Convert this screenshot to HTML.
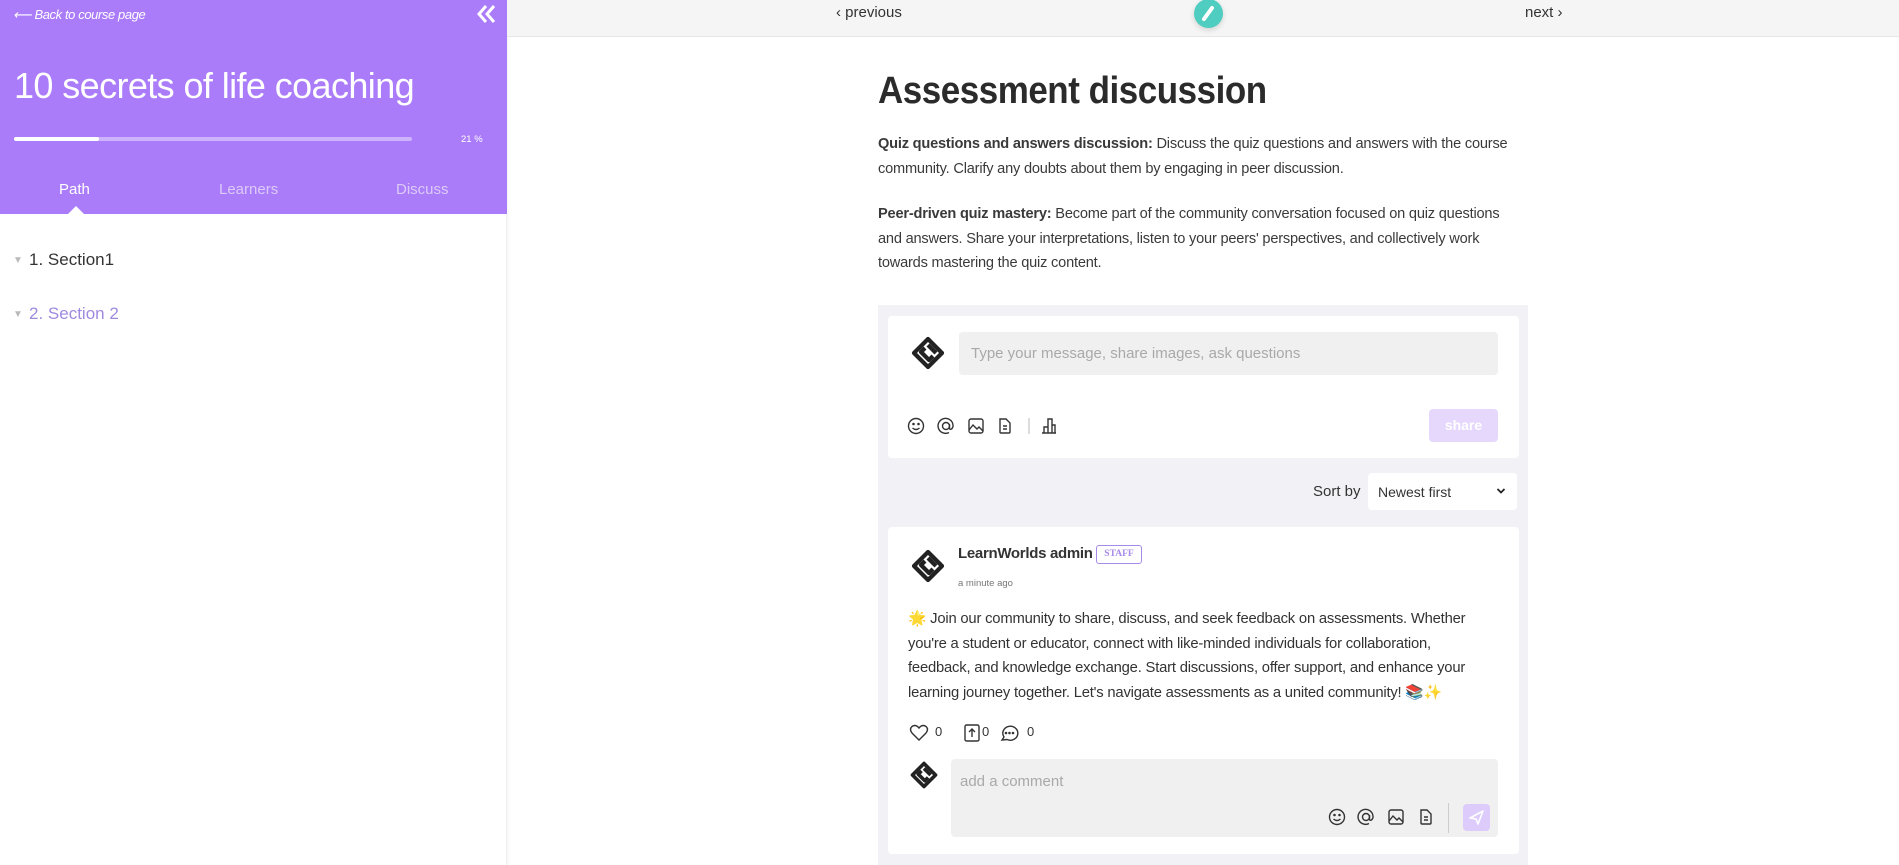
<!DOCTYPE html>
<html><head><meta charset="utf-8"><style>
*{box-sizing:border-box;margin:0;padding:0}
body{width:1899px;height:865px;overflow:hidden;background:#fff;font-family:"Liberation Sans",sans-serif;color:#333;position:relative}
.abs{position:absolute}
#side{left:0;top:0;width:507px;height:865px;background:#fff;box-shadow:1px 0 3px rgba(0,0,0,.06);border-right:1px solid #f0f0f0}
#hdr{left:0;top:0;width:507px;height:214px;background:#ab7cf9}
.t{white-space:nowrap}
#top{left:507px;top:0;width:1392px;height:37px;background:#f5f5f5;border-bottom:1px solid #e6e6e6}
p.para{font-size:14.6px;line-height:24.5px;color:#3a3a3a;white-space:nowrap;letter-spacing:-0.2px}
.card{background:#fff;border-radius:4px}
</style></head><body>
<div id="side" class="abs">
 <div id="hdr" class="abs">
  <div class="abs t" style="left:13px;top:7px;font-size:13px;font-style:italic;color:#fff;letter-spacing:-0.4px">⟵ Back to course page</div>
  <svg class="abs" style="left:476px;top:4px" width="22" height="20" viewBox="0 0 22 20"><path d="M10 2 L3 10 L10 18 M18 2 L11 10 L18 18" fill="none" stroke="#fff" stroke-width="3"/></svg>
  <div class="abs t" style="left:14px;top:65px;font-size:36px;color:#fff;letter-spacing:-0.6px">10 secrets of life coaching</div>
  <div class="abs" style="left:14px;top:137px;width:398px;height:4px;background:#cdb3fb;border-radius:2px"></div>
  <div class="abs" style="left:14px;top:137px;width:85px;height:4px;background:#fff;border-radius:2px"></div>
  <div class="abs t" style="left:461px;top:134px;font-size:9.5px;color:#fff">21 %</div>
  <div class="abs t" style="left:59px;top:181px;font-size:15px;color:#fff">Path</div>
  <div class="abs t" style="left:219px;top:181px;font-size:15px;color:#dccaf8">Learners</div>
  <div class="abs t" style="left:396px;top:181px;font-size:15px;color:#dccaf8">Discuss</div>
  <div class="abs" style="left:68px;top:206px;width:0;height:0;border-left:8px solid transparent;border-right:8px solid transparent;border-bottom:8px solid #fff"></div>
 </div>
 <div class="abs t" style="left:13px;top:255px;font-size:10px;color:#bbb">▼</div>
 <div class="abs t" style="left:29px;top:250px;font-size:17px;color:#333">1. Section1</div>
 <div class="abs t" style="left:13px;top:309px;font-size:10px;color:#bbb">▼</div>
 <div class="abs t" style="left:29px;top:304px;font-size:17px;color:#a08ae0">2. Section 2</div>
</div>

<div id="top" class="abs">
 <div class="abs t" style="left:329px;top:4px;font-size:15px;color:#333">‹ previous</div>
 <div class="abs t" style="left:1018px;top:4px;font-size:15px;color:#333">next ›</div>
</div>
<div class="abs" style="left:1194px;top:-1px;width:29px;height:29px;border-radius:50%;background:#4ecdc0;box-shadow:0 2px 6px rgba(0,0,0,.15)">
 <svg width="29" height="29" viewBox="0 0 29 29"><path d="M10 20 L18 9" stroke="#fff" stroke-width="4" stroke-linecap="round"/><path d="M9 21.5 L9.5 19" stroke="#fff" stroke-width="2"/></svg>
</div>

<div class="abs t" style="left:878px;top:70px;font-size:38px;font-weight:bold;color:#2b2b2b;transform:scaleX(.92);transform-origin:left;letter-spacing:-0.5px">Assessment discussion</div>
<p class="abs para" style="left:878px;top:132px"><b>Quiz questions and answers discussion:</b> Discuss the quiz questions and answers with the course<br>community. Clarify any doubts about them by engaging in peer discussion.</p>
<p class="abs para" style="left:878px;top:202px"><b>Peer-driven quiz mastery:</b> Become part of the community conversation focused on quiz questions<br>and answers. Share your interpretations, listen to your peers' perspectives, and collectively work<br>towards mastering the quiz content.</p>

<div class="abs" style="left:878px;top:305px;width:650px;height:560px;background:#f2f2f6"></div>

<div class="abs card" style="left:888px;top:316px;width:631px;height:142px"></div>
<svg class="abs" style="left:911px;top:336px" width="34" height="34" viewBox="0 0 34 34"><g fill="none" stroke="#222" stroke-width="4.2" stroke-linejoin="round"><path d="M17 3 L31 17 L17 31 L3 17 Z"/><path d="M14 12 L10 16 L18 24 L22 20"/><path d="M17 9 L25 17 M19 14 L22 11"/></g></svg>
<div class="abs" style="left:959px;top:332px;width:539px;height:43px;background:#f0f0f0;border-radius:4px"></div>
<div class="abs t" style="left:971px;top:345px;font-size:15px;color:#a9a9a9">Type your message, share images, ask questions</div>
<svg class="abs" style="left:907px;top:416px" width="160" height="20" viewBox="0 0 160 20" fill="none" stroke="#333" stroke-width="1.4">
 <circle cx="9" cy="10" r="7.5"/><circle cx="6.5" cy="8" r=".6" fill="#333"/><circle cx="11.5" cy="8" r=".6" fill="#333"/><path d="M5.5 12 Q9 15 12.5 12"/>
 <circle cx="39" cy="10" r="3.5"/><path d="M42.5 8 V12 Q42.5 14 44.5 13 Q46.5 11 46 9 A7.5 7.5 0 1 0 42 16.5"/>
 <rect x="62" y="3" width="14" height="14" rx="2"/><path d="M62 14 L66 9 L70 13 L72 11 L76 15"/>
 <path d="M93 3 H99 L103 7 V16 Q103 17 102 17 H94 Q93 17 93 16 Z M96 10 H100 M96 13 H100"/>
 <path d="M122 2 V18" stroke="#ccc"/>
 <path d="M137 17 V11 H141 V17 M141 17 V3 H145 V17 M145 17 V9 H148 V17 M135 17 H149"/>
</svg>
<div class="abs" style="left:1429px;top:409px;width:69px;height:33px;background:#e5d8fc;border-radius:4px;color:#fff;font-size:14px;font-weight:bold;text-align:center;line-height:33px">share</div>

<div class="abs t" style="left:1313px;top:483px;font-size:15px;color:#333">Sort by</div>
<div class="abs" style="left:1368px;top:473px;width:149px;height:37px;background:#fff;border-radius:4px"></div>
<div class="abs t" style="left:1378px;top:484px;font-size:14px;color:#333">Newest first</div>
<svg class="abs" style="left:1496px;top:487px" width="10" height="8" viewBox="0 0 10 8"><path d="M1.5 2 L5 5.5 L8.5 2" fill="none" stroke="#222" stroke-width="1.8"/></svg>

<div class="abs card" style="left:888px;top:527px;width:631px;height:327px"></div>
<svg class="abs" style="left:911px;top:549px" width="34" height="34" viewBox="0 0 34 34"><g fill="none" stroke="#222" stroke-width="4.2" stroke-linejoin="round"><path d="M17 3 L31 17 L17 31 L3 17 Z"/><path d="M14 12 L10 16 L18 24 L22 20"/><path d="M17 9 L25 17 M19 14 L22 11"/></g></svg>
<div class="abs t" style="left:958px;top:545px;font-size:15px;font-weight:bold;color:#333;letter-spacing:-0.3px">LearnWorlds admin</div>
<div class="abs t" style="left:1096px;top:545px;width:46px;height:19px;border:1.5px solid #a68ae8;border-radius:3px;font-family:'Liberation Serif',serif;font-size:9.5px;font-weight:bold;color:#a68ae8;text-align:center;line-height:16px">STAFF</div>
<div class="abs t" style="left:958px;top:578px;font-size:9.5px;color:#777">a minute ago</div>
<p class="abs para" style="left:908px;top:607px;font-size:14.8px;color:#333">🌟 Join our community to share, discuss, and seek feedback on assessments. Whether<br>you're a student or educator, connect with like-minded individuals for collaboration,<br>feedback, and knowledge exchange. Start discussions, offer support, and enhance your<br>learning journey together. Let's navigate assessments as a united community! 📚✨</p>
<svg class="abs" style="left:909px;top:723px" width="140" height="20" viewBox="0 0 140 20" fill="none" stroke="#333" stroke-width="1.4">
 <path d="M10 17 L3 10 Q0 6 3 3.5 Q6.5 1 10 5 Q13.5 1 17 3.5 Q20 6 17 10 Z"/>
 <rect x="56" y="2" width="14" height="16" rx="1.5"/><path d="M63 14 V6 M60 9 L63 6 L66 9"/>
 <path d="M93 17 L95 14 A7.5 7 0 1 1 98 16.5 Z"/><circle cx="97" cy="10" r=".6" fill="#333"/><circle cx="100.5" cy="10" r=".6" fill="#333"/><circle cx="104" cy="10" r=".6" fill="#333"/>
</svg>
<div class="abs t" style="left:935px;top:724px;font-size:13px;color:#333">0</div>
<div class="abs t" style="left:982px;top:724px;font-size:13px;color:#333">0</div>
<div class="abs t" style="left:1027px;top:724px;font-size:13px;color:#333">0</div>

<svg class="abs" style="left:910px;top:761px" width="28" height="28" viewBox="0 0 34 34"><g fill="none" stroke="#222" stroke-width="4.4" stroke-linejoin="round"><path d="M17 3 L31 17 L17 31 L3 17 Z"/><path d="M14 12 L10 16 L18 24 L22 20"/><path d="M17 9 L25 17 M19 14 L22 11"/></g></svg>
<div class="abs" style="left:951px;top:759px;width:547px;height:78px;background:#f0f0f0;border-radius:4px"></div>
<div class="abs t" style="left:960px;top:773px;font-size:15px;color:#a9a9a9">add a comment</div>
<svg class="abs" style="left:1327px;top:807px" width="120" height="20" viewBox="0 0 120 20" fill="none" stroke="#333" stroke-width="1.4">
 <circle cx="10" cy="10" r="7.5"/><circle cx="7.5" cy="8" r=".6" fill="#333"/><circle cx="12.5" cy="8" r=".6" fill="#333"/><path d="M6.5 12 Q10 15 13.5 12"/>
 <circle cx="39" cy="10" r="3.5"/><path d="M42.5 8 V12 Q42.5 14 44.5 13 Q46.5 11 46 9 A7.5 7.5 0 1 0 42 16.5"/>
 <rect x="62" y="3" width="14" height="14" rx="2"/><path d="M62 14 L66 9 L70 13 L72 11 L76 15"/>
 <path d="M94 3 H100 L104 7 V16 Q104 17 103 17 H95 Q94 17 94 16 Z M97 10 H101 M97 13 H101"/>
</svg>
<div class="abs" style="left:1448px;top:803px;width:1px;height:30px;background:#ccc"></div>
<div class="abs" style="left:1463px;top:804px;width:27px;height:27px;background:#dccbfb;border-radius:4px">
 <svg width="27" height="27" viewBox="0 0 27 27"><path d="M7 14 L20 7 L15 20 L13 15 Z" fill="none" stroke="#fff" stroke-width="1.6" stroke-linejoin="round"/></svg>
</div>
</body></html>
